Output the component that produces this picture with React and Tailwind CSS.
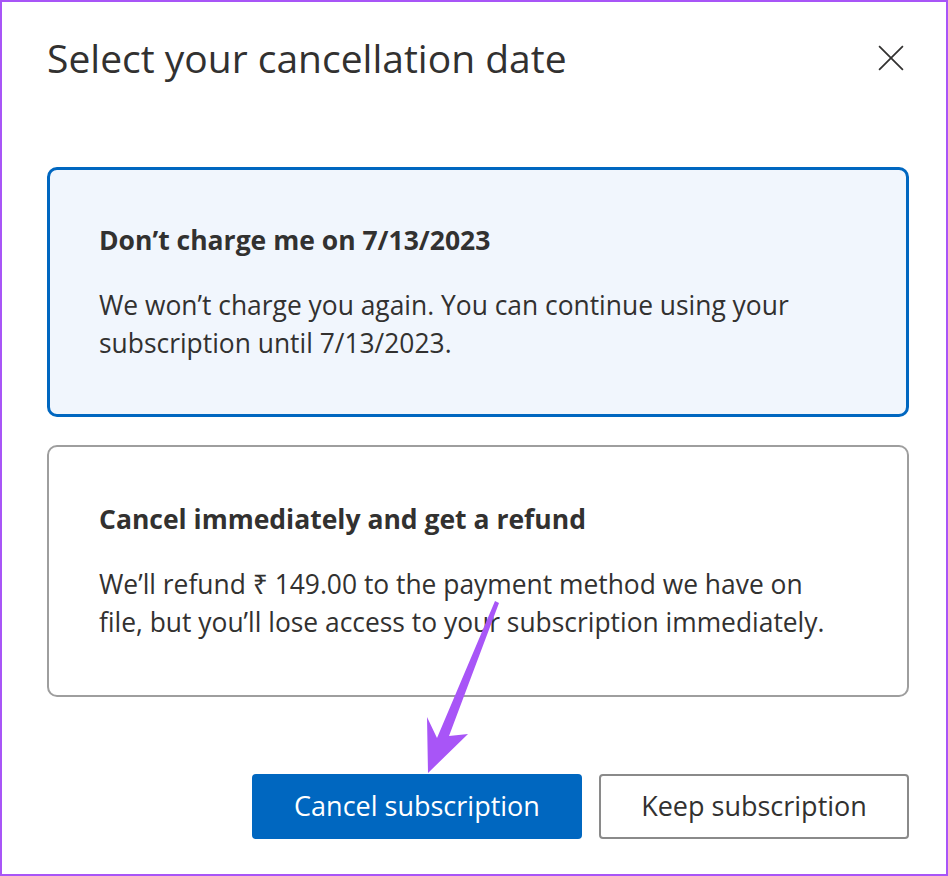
export default function App() {
  return (
    <div
      className="relative w-[948px] h-[876px] bg-white border-2 border-[#a855f7] text-[#323130] overflow-hidden"
      style={{ fontFamily: "'Open Sans', 'Noto Sans', sans-serif" }}
    >
      <div className="flex items-center justify-between pl-[45px] pr-[37px] h-[112px]">
        <h1 className="text-[39px] leading-[44px] font-normal">Select your cancellation date</h1>
        <button className="w-[28px] h-[28px] mr-[4px] flex items-center justify-center text-[#323130]">
          <svg width="26" height="26" viewBox="0 0 24 24" fill="none" stroke="currentColor" strokeWidth="1.6">
            <path d="M1 1L23 23M23 1L1 23" />
          </svg>
        </button>
      </div>

      <div className="pl-[45px] pr-[37px] mt-[53px] flex flex-col gap-[28px]">
        <div className="h-[250px] rounded-[10px] border-[3px] border-[#0067c0] bg-[#f1f6fd] pl-[49px] flex flex-col justify-center">
          <div className="text-[26.5px] leading-[36px] font-bold">Don’t charge me on 7/13/2023</div>
          <div className="mt-[28px] text-[26.4px] leading-[38px]">
            We won’t charge you again. You can continue using your
            <br />
            subscription until 7/13/2023.
          </div>
        </div>
        <div className="h-[252px] rounded-[10px] border-2 border-[#9e9e9e] bg-white pl-[50px] flex flex-col justify-center">
          <div className="text-[26.5px] leading-[36px] font-bold">Cancel immediately and get a refund</div>
          <div className="mt-[28px] text-[26.4px] leading-[38px]">
            We’ll refund ₹ 149.00 to the payment method we have on
            <br />
            file, but you’ll lose access to your subscription immediately.
          </div>
        </div>
      </div>

      <div className="pr-[37px] mt-[77px] flex justify-end gap-[17px]">
        <button className="w-[330px] h-[65px] rounded-[4px] bg-[#0067c0] text-white text-[27px]">Cancel subscription</button>
        <button className="w-[310px] h-[65px] rounded-[4px] border-2 border-[#8a8a8a] bg-white text-[#323130] text-[27px]">Keep subscription</button>
      </div>

      <svg className="absolute left-[-2px] top-[-2px] pointer-events-none" width="948" height="876" viewBox="0 0 948 876">
        <polygon points="495,601 499,603 449,736 468,734 428,773 427,717 437,738" fill="#a855f7" />
      </svg>
    </div>
  );
}
